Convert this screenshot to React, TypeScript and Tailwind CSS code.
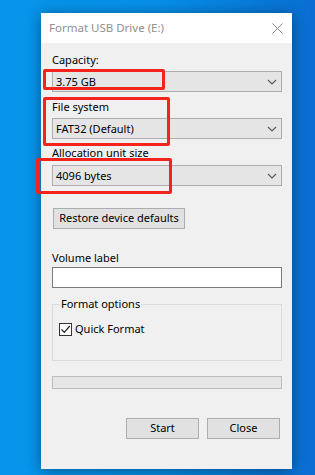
import React from 'react';

const font = { fontFamily: '"Noto Sans", "Open Sans", sans-serif' };

const Chevron = () => (
  <svg width="10" height="6" viewBox="0 0 10 6" className="mr-[4px]">
    <path d="M1 1 L5 5 L9 1" fill="none" stroke="#5a5a5a" strokeWidth="1.1" />
  </svg>
);

const Select = ({ value }: { value: string }) => (
  <div className="flex h-[21px] w-[230px] items-center justify-between border border-[#adadad] bg-[#e5e5e5] pl-[3px]">
    <span className="text-[11px] leading-none text-black">{value}</span>
    <Chevron />
  </div>
);

const Label = ({ children, className = '' }: { children: React.ReactNode; className?: string }) => (
  <div className={`h-[14px] text-[11px] leading-[14px] text-black ${className}`}>{children}</div>
);

const Button = ({ children, className = '' }: { children: React.ReactNode; className?: string }) => (
  <div
    className={`flex h-[21px] items-center justify-center border border-[#adadad] bg-[#e1e1e1] text-[11px] text-black ${className}`}
  >
    {children}
  </div>
);

const App = () => {
  return (
    <div
      className="relative h-[475px] w-[315px] overflow-hidden bg-gradient-to-r from-[#0795ec] via-[#068fe9] to-[#0a6ed2] pl-[41px] pt-[13px]"
      style={font}
    >
      <div className="flex h-[456px] w-[251px] flex-col bg-[#f0f0f0] shadow-[0_2px_14px_rgba(0,0,0,0.4)]">
        {/* title bar */}
        <div className="flex h-[30px] items-center justify-between bg-white pl-[8px] pr-[9px]">
          <span className="text-[11.5px] text-[#8f8f8f]">Format USB Drive (E:)</span>
          <svg width="11" height="11" viewBox="0 0 11 11">
            <path d="M0.5 0.5 L10.5 10.5 M10.5 0.5 L0.5 10.5" stroke="#8a8a8a" strokeWidth="1" />
          </svg>
        </div>

        <div className="flex flex-col pl-[11px]">
          <Label className="mt-[10px]">Capacity:</Label>
          <div className="mt-[4px]">
            <Select value="3.75 GB" />
          </div>

          <Label className="mt-[8px]">File system</Label>
          <div className="mt-[4px]">
            <Select value="FAT32 (Default)" />
          </div>

          <Label className="mt-[7px]">Allocation unit size</Label>
          <div className="mt-[5px]">
            <Select value="4096 bytes" />
          </div>

          <Button className="ml-[1px] mt-[22px] w-[132px]">Restore device defaults</Button>

          <Label className="mt-[22px]">Volume label</Label>
          <div className="mt-[2px] h-[21px] w-[230px] border border-[#7a7a7a] bg-white" />

          <div className="relative mt-[16px] h-[57px] w-[230px] border border-[#dcdcdc]">
            <span className="absolute left-[7px] top-[-8px] bg-[#f0f0f0] px-[1px] text-[11px] leading-[14px] text-black">
              Format options
            </span>
            <div className="ml-[6px] mt-[17px] flex items-center gap-[3px]">
              <div className="flex h-[13px] w-[13px] items-center justify-center border border-[#333333] bg-white">
                <svg width="11" height="11" viewBox="0 0 11 11">
                  <path d="M1.5 5.5 L4.3 8.3 L9.8 2" fill="none" stroke="#222" strokeWidth="1.2" />
                </svg>
              </div>
              <span className="text-[11px] leading-[14px] text-black">Quick Format</span>
            </div>
          </div>

          <div className="mt-[15px] h-[13px] w-[230px] border border-[#bcbcbc] bg-[#e6e6e6]" />

          <div className="mt-[29px] flex w-[228px] justify-end gap-[8px]">
            <Button className="w-[73px]">Start</Button>
            <Button className="w-[73px]">Close</Button>
          </div>
        </div>
      </div>

      {/* annotation boxes */}
      <div className="absolute left-[43px] top-[69px] h-[21px] w-[122px] rounded-[2px] border-[3px] border-[#f5231e]" />
      <div className="absolute left-[43px] top-[97px] h-[49px] w-[127px] rounded-[2px] border-[3px] border-[#f5231e]" />
      <div className="absolute left-[36px] top-[158px] h-[36px] w-[136px] rounded-[2px] border-[3px] border-[#f5231e]" />
    </div>
  );
};

export default App;
